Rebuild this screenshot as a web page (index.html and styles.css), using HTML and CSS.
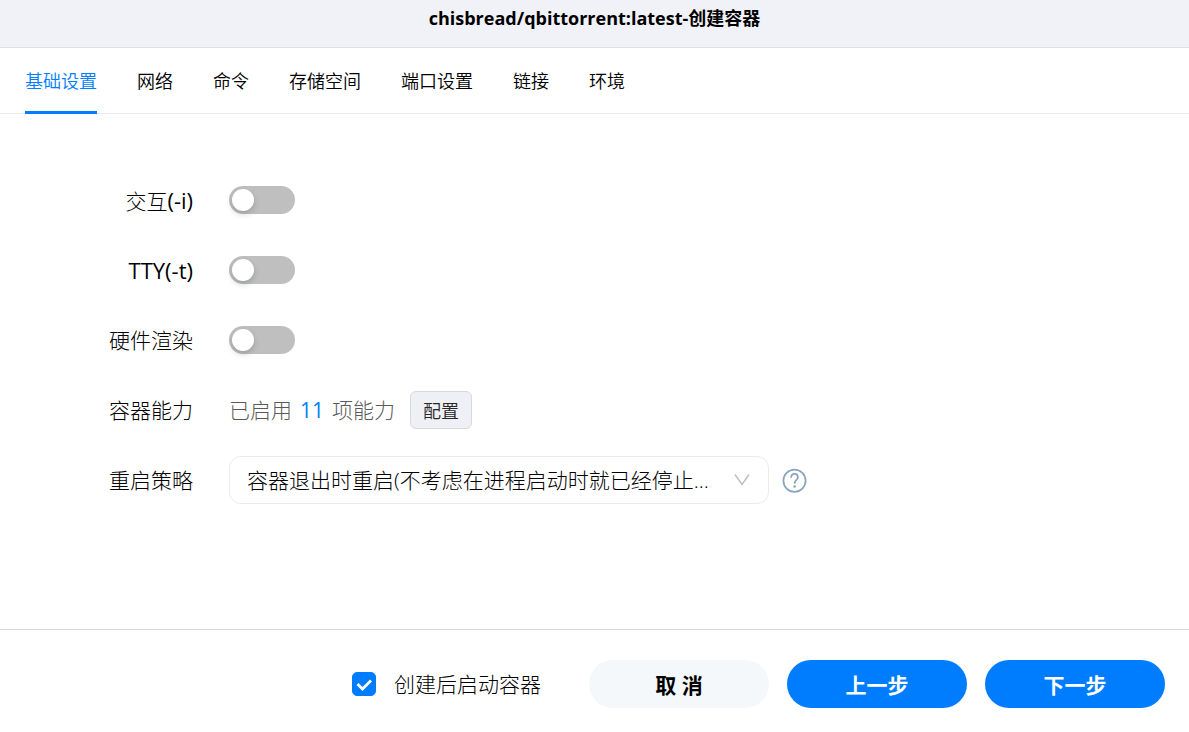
FILE: index.html
```html
<!DOCTYPE html>
<html lang="zh-CN">
<head>
  <meta charset="UTF-8" />
  <meta name="viewport" content="width=device-width, initial-scale=1.0" />
  <title>创建容器</title>
  <link rel="stylesheet" href="styles.css">
</head>
<body>
  <header>
    <h1>chisbread/qbittorrent:latest-创建容器</h1>
  </header>

  <nav>
    <a href="#basic" class="active">基础设置</a>
    <a href="#network">网络</a>
    <a href="#command">命令</a>
    <a href="#storage">存储空间</a>
    <a href="#ports">端口设置</a>
    <a href="#links">链接</a>
    <a href="#env">环境</a>
  </nav>

  <main>
    <div class="row">
      <label class="name" for="interactive">交互<span class="latin">(-i)</span></label>
      <input class="switch" type="checkbox" id="interactive">
    </div>
    <div class="row">
      <label class="name" for="tty"><span class="latin">TTY(-t)</span></label>
      <input class="switch" type="checkbox" id="tty">
    </div>
    <div class="row">
      <label class="name" for="render">硬件渲染</label>
      <input class="switch" type="checkbox" id="render">
    </div>
    <div class="row">
      <label class="name" for="capability">容器能力</label>
      <span class="enabled">已启用 <b>11</b> 项能力</span>
      <button class="config-btn" type="button" id="capability">配置</button>
    </div>
    <div class="row">
      <label class="name" for="restart">重启策略</label>
      <div class="select-wrap">
        <select id="restart">
          <option>容器退出时重启(不考虑在进程启动时就已经停止了的容器)</option>
        </select>
        <svg class="arrow" width="16" height="14" viewBox="0 0 16 14" fill="none" stroke="#bfbfbf" stroke-width="1.5">
          <path d="M1 1.5l7 10 7-10"/>
        </svg>
      </div>
      <a class="help" href="#help" aria-label="帮助">
        <svg width="25" height="25" viewBox="0 0 25 25" fill="none" stroke="#8ca5be" stroke-width="1.8">
          <circle cx="12.5" cy="12.8" r="11.1"/>
          <path d="M9.1 9.7c0-2.4 1.4-3.8 3.4-3.8s3.4 1.3 3.4 3.4c0 2.8-3.3 2.9-3.3 5.6v.8"/>
          <circle cx="12.6" cy="18.5" r="1.3" fill="#8ca5be" stroke="none"/>
        </svg>
      </a>
    </div>
  </main>

  <footer>
    <label class="start">
      <input type="checkbox" checked>
      <svg class="tick" width="24" height="24" viewBox="0 0 24 24" fill="none" stroke="#fff" stroke-width="2.8">
        <path d="M5.5 12l5 5L19 8.5"/>
      </svg>
      <span>创建后启动容器</span>
    </label>
    <div class="actions">
      <button type="button" class="btn plain">取 消</button>
      <button type="button" class="btn">上一步</button>
      <button type="button" class="btn">下一步</button>
    </div>
  </footer>
</body>
</html>
```

FILE: styles.css
```css
:root{
  --accent:#007dff;
  --line:#ebebeb;
}
*{box-sizing:border-box;font-family:"Open Sans","Noto Sans CJK SC",sans-serif}
body{
  margin:0;min-height:100vh;background:#fff;color:#000;
  display:flex;flex-direction:column;
  font-size:21px;font-weight:300;line-height:30px;
}
header{
  height:48px;padding-top:5px;
  background:#f1f2f7;border-bottom:1px solid #dfe0e5;
  text-align:center;
}
h1{margin:0;font-size:18px;font-weight:700;line-height:26px}

nav{
  height:66px;padding:0 25px;
  display:flex;gap:40px;
  box-shadow:inset 0 -1px var(--line);
}
nav a{
  color:#000;text-decoration:none;
  font-size:18px;font-weight:350;line-height:66px;
}
nav a.active{color:var(--accent);box-shadow:inset 0 -3px var(--accent)}

main{
  flex:1;padding:62px 24px;
  display:flex;flex-direction:column;gap:22px;
}
.row{display:flex;align-items:center;height:48px}
.name{width:169px;margin-right:36px;text-align:right}
.latin{font-size:22px;font-weight:400}

.switch{
  appearance:none;margin:0;
  width:66px;height:28px;padding:3px;
  border-radius:14px;background:#bfbfbf;
  display:flex;cursor:pointer;
}
.switch::before{
  content:"";width:22px;height:22px;border-radius:50%;
  background:#fff;box-shadow:0 3px 6px rgba(0,35,11,.2);
}
.switch:checked{background:var(--accent);justify-content:flex-end}

.enabled{display:flex;gap:8px;color:#595959}
.enabled b{color:var(--accent);font-weight:400}
.config-btn{
  height:38px;margin-left:15px;padding:0 12px;
  border:1px solid #d9d9d9;border-radius:6px;background:#eff0f5;
  color:#262626;font-size:18px;font-weight:350;
}

.select-wrap{display:grid;align-items:center;width:540px}
.select-wrap select,.arrow{grid-area:1/1}
.select-wrap select{
  appearance:none;width:100%;height:48px;padding:0 54px 0 17px;
  border:1px solid var(--line);border-radius:12px;background:#fff;
  color:#000;font-size:21px;font-weight:300;
  text-overflow:ellipsis;white-space:nowrap;overflow:hidden;
}
.arrow{justify-self:end;margin-right:19px;pointer-events:none}
.help{display:flex;margin-left:13px}

footer{
  padding:30px 24px 24px;border-top:1px solid #d9d9d9;
  display:flex;justify-content:flex-end;align-items:center;gap:48px;
}
.start{display:grid;grid-template-columns:24px auto;column-gap:18px;align-items:center}
.start input{
  appearance:none;grid-area:1/1;margin:0;
  width:24px;height:24px;border:1px solid #d9d9d9;border-radius:5px;
}
.start input:checked{background:var(--accent);border-color:var(--accent)}
.tick{grid-area:1/1;pointer-events:none}
.actions{display:flex;gap:18px}
.btn{
  width:180px;height:48px;border:none;border-radius:24px;
  background:var(--accent);color:#fff;font-size:21px;font-weight:700;
}
.btn.plain{background:#f4f8fb;color:#000}
```
